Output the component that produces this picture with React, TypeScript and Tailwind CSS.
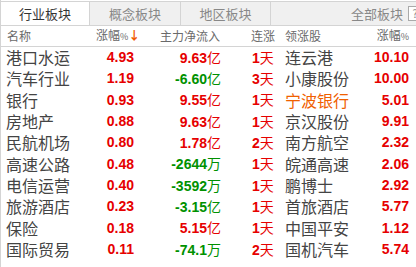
import React from "react";

interface Row {
  name: string;
  change: string;
  flow: string;
  unit: string;
  days: string;
  leader: string;
  leaderChange: string;
  highlight?: boolean;
}

const rows: Row[] = [
  { name: "港口水运", change: "4.93", flow: "9.63", unit: "亿", days: "1", leader: "连云港", leaderChange: "10.10" },
  { name: "汽车行业", change: "1.19", flow: "-6.60", unit: "亿", days: "3", leader: "小康股份", leaderChange: "10.00" },
  { name: "银行", change: "0.93", flow: "9.55", unit: "亿", days: "1", leader: "宁波银行", leaderChange: "5.01", highlight: true },
  { name: "房地产", change: "0.88", flow: "9.63", unit: "亿", days: "1", leader: "京汉股份", leaderChange: "9.91" },
  { name: "民航机场", change: "0.80", flow: "1.78", unit: "亿", days: "2", leader: "南方航空", leaderChange: "2.32" },
  { name: "高速公路", change: "0.48", flow: "-2644", unit: "万", days: "1", leader: "皖通高速", leaderChange: "2.06" },
  { name: "电信运营", change: "0.40", flow: "-3592", unit: "万", days: "1", leader: "鹏博士", leaderChange: "2.92" },
  { name: "旅游酒店", change: "0.23", flow: "-3.15", unit: "亿", days: "1", leader: "首旅酒店", leaderChange: "5.77" },
  { name: "保险", change: "0.18", flow: "5.15", unit: "亿", days: "1", leader: "中国平安", leaderChange: "1.12" },
  { name: "国际贸易", change: "0.11", flow: "-74.1", unit: "万", days: "2", leader: "国机汽车", leaderChange: "5.74" },
];

const cjk = "font-['Noto_Sans_CJK_SC',sans-serif]";
const num = "font-['Liberation_Sans',Arial,sans-serif] font-bold";

export default function App() {
  return (
    <div className={`w-[416px] h-[267px] overflow-hidden bg-white border-l border-[#d4d4d4] ${cjk}`}>
      {/* Tabs */}
      <div className="flex h-[25px] bg-[#f0f0f0] border-t border-[#d4d4d4] mt-[1px] border-b text-[13px] leading-[23px]">
        <div className="w-[89px] flex items-center justify-center bg-white text-[#333] border-r border-[#d4d4d4]">
          行业板块
        </div>
        <div className="w-[91px] flex items-center justify-center text-[#888] border-r border-[#d4d4d4]">
          概念板块
        </div>
        <div className="w-[90px] flex items-center justify-center text-[#888] border-r border-[#d4d4d4]">
          地区板块
        </div>
        <div className="flex-1 flex items-center justify-end pr-[13px] text-[#888] relative">
          <span>全部板块</span>
          <span className="absolute right-[-6px] top-[4px] w-[14px] h-[15px] border border-[#aaa] bg-white flex items-center justify-center text-[11px] leading-none">
            ?
          </span>
        </div>
      </div>

      {/* Header */}
      <div className="flex items-center h-[21px] border-b border-[#d4d4d4] text-[12px] text-[#6a6a6a] leading-[20px]">
        <div className="w-[95px] pl-[6px]">名称</div>
        <div className="w-[35px] text-right whitespace-nowrap">
          涨幅<span className="text-[9px]">%</span>
          <span className="text-[#f05a00] font-bold">↓</span>
        </div>
        <div className="w-[89px] text-right whitespace-nowrap">主力净流入</div>
        <div className="w-[65px] pl-[31px] whitespace-nowrap">连涨</div>
        <div className="w-[80px] whitespace-nowrap">领涨股</div>
        <div className="w-[44px] text-right whitespace-nowrap">
          涨幅<span className="text-[9px]">%</span>
        </div>
      </div>

      {/* Rows */}
      <div className="flex flex-col">
        {rows.map((r) => {
          const flowColor = r.flow.startsWith("-") ? "text-[#009100]" : "text-[#e60000]";
          return (
            <div key={r.name} className="flex items-center h-[21.33px] leading-[21px]">
              <div className="w-[95px] pl-[5px] text-[16px] text-[#444] whitespace-nowrap">{r.name}</div>
              <div className={`w-[38px] text-right text-[14px] text-[#e60000] ${num}`}>{r.change}</div>
              <div className={`w-[87px] text-right text-[14px] whitespace-nowrap ${flowColor}`}>
                <span className={num}>{r.flow}</span>
                <span>{r.unit}</span>
              </div>
              <div className="w-[64px] pl-[31px] text-[14px] text-[#e60000] whitespace-nowrap">
                <span className={num}>{r.days}</span>
                <span>天</span>
              </div>
              <div className={`w-[80px] text-[16px] whitespace-nowrap ${r.highlight ? "text-[#f06000]" : "text-[#444]"}`}>
                {r.leader}
              </div>
              <div className={`w-[44px] text-right text-[14px] text-[#e60000] ${num}`}>{r.leaderChange}</div>
            </div>
          );
        })}
      </div>
    </div>
  );
}
